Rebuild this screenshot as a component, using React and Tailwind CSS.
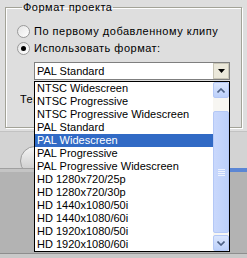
const formats = [
  "NTSC Widescreen",
  "NTSC Progressive",
  "NTSC Progressive Widescreen",
  "PAL Standard",
  "PAL Widescreen",
  "PAL Progressive",
  "PAL Progressive Widescreen",
  "HD 1280x720/25p",
  "HD 1280x720/30p",
  "HD 1440x1080/50i",
  "HD 1440x1080/60i",
  "HD 1920x1080/50i",
  "HD 1920x1080/60i",
];

function Radio({ checked, label }) {
  return (
    <label className="flex items-center gap-[4px] h-[13px]">
      <span className="w-[13px] h-[13px] rounded-full border border-[#9a9a9a] bg-gradient-to-br from-[#e4e4e4] to-white flex items-center justify-center">
        {checked && <span className="w-[5px] h-[5px] rounded-full bg-black" />}
      </span>
      <span className="tracking-[0.5px]">{label}</span>
    </label>
  );
}

function ScrollButton({ up }) {
  return (
    <div className="h-[16px] rounded-[2px] border border-[#b4c8f6] bg-gradient-to-b from-[#dbe6fd] to-[#bcd0fa] flex items-center justify-center">
      <svg width="8" height="5" viewBox="0 0 8 5">
        <path
          d={up ? "M0.5 4.5 L4 1 L7.5 4.5" : "M0.5 0.5 L4 4 L7.5 0.5"}
          fill="none"
          stroke="#4d6185"
          strokeWidth="1.6"
        />
      </svg>
    </div>
  );
}

export default function App() {
  return (
    <div className="relative w-[247px] h-[258px] overflow-hidden bg-[#dedede] text-[11px] leading-[13px] text-black font-['Liberation_Sans',sans-serif]">
      {/* Формат проекта */}
      <fieldset className="mx-[5px] mt-[1px] h-[127px] w-[237px] border border-[#a3a398] shadow-[1px_1px_0_#fff,inset_1px_1px_0_#fff] px-[11px]">
        <legend className="ml-[5px] -mx-[5px] px-[1px] tracking-[0.5px]">Формат проекта</legend>
        <div className="flex flex-col gap-[4px] pt-[11px]">
          <Radio label="По первому добавленному клипу" />
          <Radio checked label="Использовать формат:" />
        </div>
        <div className="ml-[17px] mt-[7px] w-[196px] h-[18px] border border-[#7f7f7f] bg-white flex items-center">
          <span className="flex-1 pl-[2px]">PAL Standard</span>
          <div className="w-[16px] h-[16px] border border-[#c8c5b6] bg-[#ebe8da] flex items-center justify-center">
            <svg width="7" height="4" viewBox="0 0 7 4">
              <path d="M0 0 H7 L3.5 4 Z" fill="#000" />
            </svg>
          </div>
        </div>
        {/* подпись, закрытая списком */}
        <div className="mt-[13px] ml-[3px] w-[14px] overflow-hidden whitespace-nowrap tracking-[0.5px]">
          Текущий формат
        </div>
      </fieldset>

      {/* панель под диалогом */}
      <div className="mt-[3px] h-[37px] overflow-hidden bg-[#d3d3d3] border-t border-[#c2c2c2] pl-[20px] pt-[14px]">
        <div className="w-[30px] h-[30px] rounded-full border border-[#9c9c9c] bg-gradient-to-b from-[#f4f4f4] to-[#c6c6c6]" />
      </div>
      <div className="flex h-[4px]">
        <div className="w-[230px] border-t border-[#a0a0a0] bg-[#c4c4c4]" />
        <div className="flex-1 bg-[#5b86d4]" />
      </div>
      <div className="h-[81px] bg-[#b3b3b3]" />
      <div className="h-[1px] bg-[#8e8e8e]" />
      <div className="h-[10px] bg-[#c9c9c9]" />

      {/* выпадающий список */}
      <div className="absolute left-[34px] top-[81px] w-[196px] h-[171px] border border-black bg-white flex">
        <ul className="flex-1">
          {formats.map((f) => (
            <li
              key={f}
              className={`h-[13px] pl-[2px] whitespace-nowrap ${
                f === "PAL Widescreen" ? "bg-[#316ac5] text-white" : ""
              }`}
            >
              {f}
            </li>
          ))}
        </ul>
        <div className="w-[16px] bg-[#f7f6f2] flex flex-col">
          <ScrollButton up />
          <div className="flex-1 pt-[13px] pb-[2px]">
            <div className="h-full rounded-[2px] border border-[#b4c8f6] bg-gradient-to-r from-[#c9d8fc] to-[#bcd0fa] flex flex-col items-center justify-center gap-[1px]">
              <span className="w-[7px] h-[1px] bg-[#eef3fe]" />
              <span className="w-[7px] h-[1px] bg-[#eef3fe]" />
              <span className="w-[7px] h-[1px] bg-[#eef3fe]" />
              <span className="w-[7px] h-[1px] bg-[#eef3fe]" />
            </div>
          </div>
          <ScrollButton />
        </div>
      </div>
    </div>
  );
}
